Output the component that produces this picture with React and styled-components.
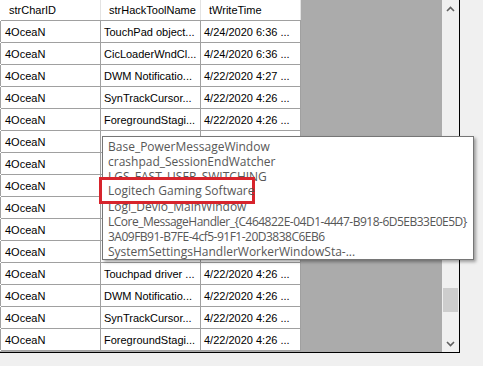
import React from 'react'
import styled, {createGlobalStyle} from 'styled-components'

const GlobalStyle = createGlobalStyle`
    html, body {
        margin: 0;
        padding: 0;
        background: #f0f0f0;
    }
`

const topRows = [
    ['4OceaN', 'TouchPad object...', '4/24/2020 6:36 ...'],
    ['4OceaN', 'CicLoaderWndCl...', '4/24/2020 6:36 ...'],
    ['4OceaN', 'DWM Notificatio...', '4/22/2020 4:27 ...'],
    ['4OceaN', 'SynTrackCursor...', '4/22/2020 4:26 ...'],
    ['4OceaN', 'ForegroundStagi...', '4/22/2020 4:26 ...'],
    ['4OceaN', 'Base_PowerMes...', '4/22/2020 4:26 ...'],
    ['4OceaN', 'crashpad_Sessi...', '4/22/2020 4:26 ...'],
    ['4OceaN', 'LGS_FAST_USE...', '4/22/2020 4:26 ...'],
    ['4OceaN', 'Logitech Gamin...', '4/22/2020 4:26 ...'],
    ['4OceaN', 'Logi_Devio_Ma...', '4/22/2020 4:26 ...'],
    ['4OceaN', 'LCore_Message...', '4/22/2020 4:26 ...'],
    ['4OceaN', 'Touchpad driver ...', '4/22/2020 4:26 ...'],
    ['4OceaN', 'DWM Notificatio...', '4/22/2020 4:26 ...'],
    ['4OceaN', 'SynTrackCursor...', '4/22/2020 4:26 ...'],
    ['4OceaN', 'ForegroundStagi...', '4/22/2020 4:26 ...'],
]

// hex ids are set tighter, Segoe digits are narrower than Open Sans ones
const popupLines = [
    {text: 'Base_PowerMessageWindow'},
    {text: 'crashpad_SessionEndWatcher'},
    {text: 'LGS_FAST_USER_SWITCHING'},
    {text: 'Logitech Gaming Software'},
    {text: 'Logi_Devio_MainWindow'},
    {text: 'LCore_MessageHandler_{C464822E-04D1-4447-B918-6D5EB33E0E5D}', tight: true},
    {text: '3A09FB91-B7FE-4cf5-91F1-20D3838C6EB6', tight: true},
    {text: 'SystemSettingsHandlerWorkerWindowSta-...'},
]

const Arrow = ({down}) => (
    <svg width="9" height="6" viewBox="0 0 9 6">
        <path
            d={down ? 'M1 1 L4.5 4.5 L8 1' : 'M1 5 L4.5 1.5 L8 5'}
            fill="none"
            stroke="#606060"
            strokeWidth="1.6"
        />
    </svg>
)

const App = () => {
    return (
        <Page>
            <GlobalStyle />
            <Frame>
                <Workspace>
                    <Table>
                        <HeaderRow>
                            <HeadCell>strCharID</HeadCell>
                            <HeadCell>strHackToolName</HeadCell>
                            <HeadCell>tWriteTime</HeadCell>
                        </HeaderRow>
                        {topRows.map((row, i) => (
                            <Row key={i}>
                                <Cell first>{row[0]}</Cell>
                                <Cell>{row[1]}</Cell>
                                <Cell>{row[2]}</Cell>
                            </Row>
                        ))}
                    </Table>
                </Workspace>
                <ScrollBar>
                    <ScrollButton><Arrow /></ScrollButton>
                    <Track>
                        <Thumb />
                    </Track>
                    <ScrollButton><Arrow down /></ScrollButton>
                </ScrollBar>
            </Frame>

            <Popup>
                {popupLines.map((line, i) => (
                    <PopupLine key={i} tight={line.tight}>{line.text}</PopupLine>
                ))}
            </Popup>
            <Highlight>Logitech Gaming Software</Highlight>
        </Page>
    )
}

export default App


const Page = styled.div`
    position: relative;
    width: 483px;
    height: 366px;
    background: #f0f0f0;
    overflow: hidden;
`

const Frame = styled.div`
    display: flex;
    width: 459px;
    height: 352px;
    border-right: 1px solid #000;
    border-bottom: 1px solid #000;
`

const Workspace = styled.div`
    flex: 1;
    background: #ababab;
    overflow: hidden;
`

const Table = styled.div`
    width: 301px;
    background: #fff;
    padding-left: 1px;
    box-sizing: border-box;
    font-family: "Liberation Sans", Arial, sans-serif;
    font-size: 11px;
    color: #000;
`

const HeaderRow = styled.div`
    display: grid;
    grid-template-columns: 100px 100px 100px;
    height: 21px;
    border-bottom: 1px solid #a0a0a0;
    box-sizing: border-box;
`

const HeadCell = styled.div`
    display: flex;
    align-items: center;
    padding-left: 8px;
    border-right: 1px solid #e3e3e3;
    background: #fff;
`

const Row = styled.div`
    display: grid;
    grid-template-columns: 100px 100px 100px;
    height: 22px;
    border-bottom: 1px solid #a0a0a0;
    box-sizing: border-box;
`

const Cell = styled.div`
    display: flex;
    align-items: center;
    padding-left: ${props => props.first ? '4px' : '3px'};
    border-right: 1px solid #a0a0a0;
    border-left: ${props => props.first ? '1px solid #a0a0a0' : 'none'};
    margin-left: ${props => props.first ? '-1px' : '0'};
    white-space: nowrap;
    overflow: hidden;
`

const ScrollBar = styled.div`
    width: 17px;
    display: flex;
    flex-direction: column;
    background: #f0f0f0;
`

const ScrollButton = styled.div`
    height: 17px;
    display: flex;
    align-items: center;
    justify-content: center;
`

const Track = styled.div`
    flex: 1;
    position: relative;
`

const Thumb = styled.div`
    position: absolute;
    left: 1px;
    right: 1px;
    top: 271px;
    height: 24px;
    background: #cdcdcd;
`

const Popup = styled.div`
    position: absolute;
    left: 102px;
    top: 136px;
    width: 372px;
    height: 124px;
    box-sizing: border-box;
    padding: 2px 0 0 5px;
    background: #fff;
    border: 1px solid #767676;
    box-shadow: 2px 2px 3px rgba(0, 0, 0, 0.35);
    font-family: "Open Sans", "Noto Sans", sans-serif;
    font-size: 12px;
    color: #575757;
    overflow: hidden;
`

const PopupLine = styled.div`
    height: 15px;
    line-height: 15px;
    white-space: nowrap;
    letter-spacing: ${props => props.tight ? '-0.5px' : '0'};
`

const Highlight = styled.div`
    position: absolute;
    left: 99px;
    top: 177px;
    width: 156px;
    height: 27px;
    box-sizing: border-box;
    border: 3px solid #d7242c;
    background: #fff;
    padding-left: 6px;
    line-height: 21px;
    font-family: "Open Sans", "Noto Sans", sans-serif;
    font-size: 12px;
    color: #575757;
    white-space: nowrap;
`
